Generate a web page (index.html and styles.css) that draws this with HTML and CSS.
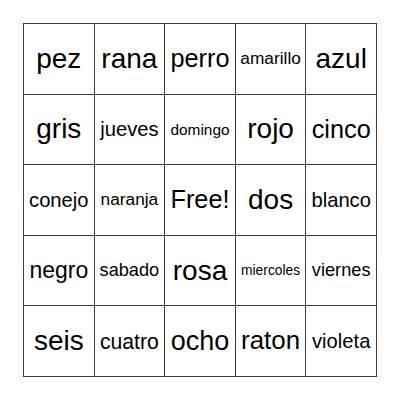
FILE: index.html
```html
<!DOCTYPE html>
<html>
<head>
<meta charset="utf-8">
<link rel="stylesheet" href="styles.css">
</head>
<body>
<div class="card">
  <div class="cell s28">pez</div>
  <div class="cell s28">rana</div>
  <div class="cell s25">perro</div>
  <div class="cell s17">amarillo</div>
  <div class="cell s28">azul</div>

  <div class="cell s28">gris</div>
  <div class="cell s20">jueves</div>
  <div class="cell s15">domingo</div>
  <div class="cell s28">rojo</div>
  <div class="cell s25">cinco</div>

  <div class="cell s20">conejo</div>
  <div class="cell s17">naranja</div>
  <div class="cell s25">Free!</div>
  <div class="cell s28">dos</div>
  <div class="cell s20">blanco</div>

  <div class="cell s23">negro</div>
  <div class="cell s18">sabado</div>
  <div class="cell s28">rosa</div>
  <div class="cell s14">miercoles</div>
  <div class="cell s18">viernes</div>

  <div class="cell s28">seis</div>
  <div class="cell s21">cuatro</div>
  <div class="cell s27">ocho</div>
  <div class="cell s26">raton</div>
  <div class="cell s20">violeta</div>
</div>
</body>
</html>
```

FILE: styles.css
```css
html, body {
  margin: 0;
  padding: 0;
  background: #ffffff;
}

body {
  padding: 23px 0 0 23px;
  font-family: "Liberation Sans", Arial, sans-serif;
  color: #000000;
}

.card {
  width: 354px;
  height: 354px;
  box-sizing: border-box;
  border: 1px solid #3c3c3c;
  background: #3c3c3c;
  display: grid;
  grid-template-columns: repeat(5, 1fr);
  grid-template-rows: repeat(5, 1fr);
  gap: 1px;
}

.cell {
  background: #ffffff;
  display: flex;
  align-items: center;
  justify-content: center;
  white-space: nowrap;
  line-height: 1;
}

.s28 { font-size: 28px; }
.s27 { font-size: 27px; }
.s26 { font-size: 25.9px; }
.s25 { font-size: 25.3px; }
.s23 { font-size: 23px; }
.s21 { font-size: 21.2px; }
.s20 { font-size: 20.2px; }
.s18 { font-size: 18.2px; }
.s17 { font-size: 17.3px; }
.s15 { font-size: 15.4px; }
.s14 { font-size: 13.8px; }
```
